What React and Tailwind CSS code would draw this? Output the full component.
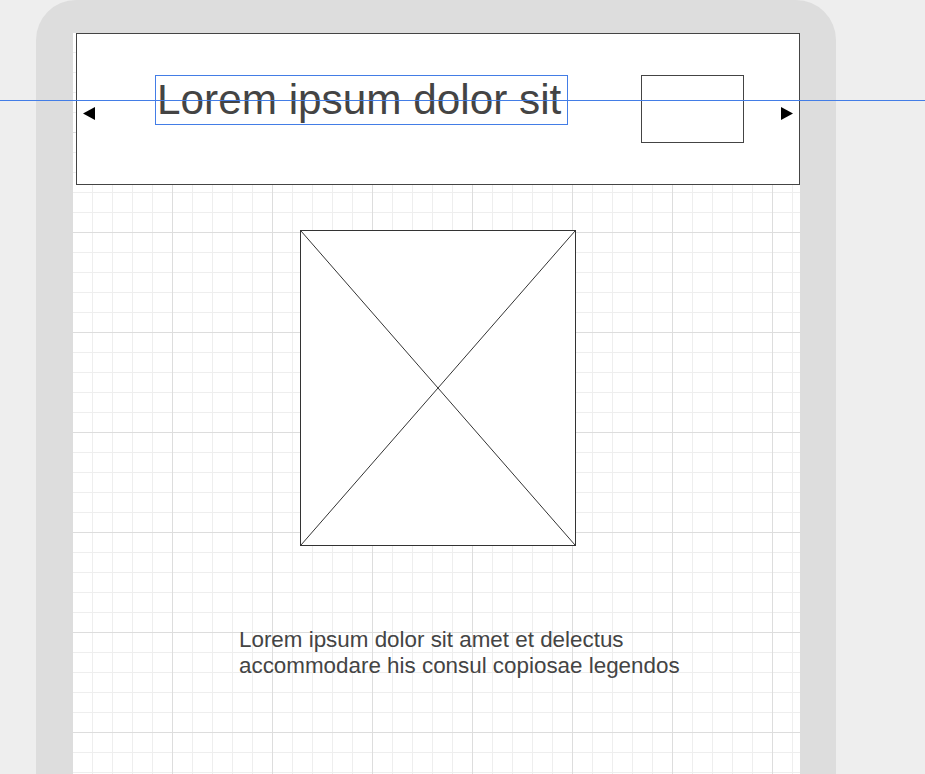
import React from 'react';

const Arrow = ({ dir }) => (
    <svg width="12" height="13" viewBox="0 0 12 13" className="shrink-0">
        {dir === 'left'
            ? <polygon points="12,0 12,13 0,6.5" fill="#000" />
            : <polygon points="0,0 0,13 12,6.5" fill="#000" />}
    </svg>
);

const App = () => {
    return (
        <div className="relative h-[774px] overflow-hidden bg-[#eeeeee] font-['Liberation_Sans',Arial,sans-serif]">
            <div className="ml-[36px] h-full w-[800px] rounded-t-[40px] bg-[#dddddd] px-[36px] pt-[32px]">
                <div className="h-full bg-white [background-image:linear-gradient(#dddddd_1px,transparent_1px),linear-gradient(to_right,#dddddd_1px,transparent_1px),linear-gradient(#eeeeee_1px,transparent_1px),linear-gradient(to_right,#eeeeee_1px,transparent_1px)] [background-size:100px_100px,100px_100px,20px_20px,20px_20px]">
                    {/* header */}
                    <div className="pl-[4px] pt-[1px]">
                        <div className="flex h-[152px] w-[724px] items-start border border-[#444444] bg-white">
                            <div className="ml-[6px] mt-[73px]">
                                <Arrow dir="left" />
                            </div>
                            <div className="ml-[60px] mt-[41px] h-[50px] w-[413px] border border-[#437de6] pl-[1px] text-[42.3px] leading-[48px] text-[#444444] whitespace-nowrap">
                                Lorem ipsum dolor sit
                            </div>
                            <div className="ml-[73px] mt-[41px] h-[68px] w-[103px] border border-[#444444]" />
                            <div className="ml-[37px] mt-[73px]">
                                <Arrow dir="right" />
                            </div>
                        </div>
                    </div>

                    {/* image placeholder */}
                    <div className="ml-[228px] mt-[45px] h-[316px] w-[276px] border border-[#333333] bg-white">
                        <svg width="100%" height="100%" viewBox="0 0 274 314" preserveAspectRatio="none">
                            <line x1="0" y1="0" x2="274" y2="314" stroke="#333" strokeWidth="1" />
                            <line x1="274" y1="0" x2="0" y2="314" stroke="#333" strokeWidth="1" />
                        </svg>
                    </div>

                    {/* caption */}
                    <div className="ml-[167px] mt-[81px] text-[22.4px] leading-[26px] text-[#444444]">
                        <div>Lorem ipsum dolor sit amet et delectus</div>
                        <div>accommodare his consul copiosae legendos</div>
                    </div>
                </div>
            </div>

            {/* guide line */}
            <div className="absolute left-0 right-0 top-[100px] h-px bg-[#437de6]" />
        </div>
    );
};

export default App;
